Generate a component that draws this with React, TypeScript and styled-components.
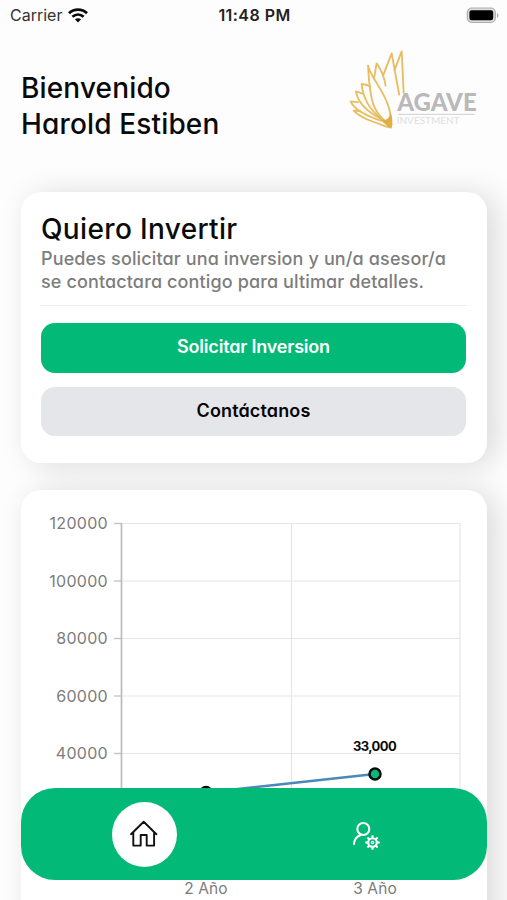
import React from "react";
import styled, { createGlobalStyle } from "styled-components";

const GREEN = "#02b978";

const Global = createGlobalStyle`
  * { box-sizing: border-box; }
  body { margin: 0; background: #fdfdfd; overflow: hidden; }
`;

const Screen = styled.main`
  width: 507px;
  height: 900px;
  overflow: hidden;
  position: relative;
  display: flex;
  flex-direction: column;
  font-family: Inter, "Liberation Sans", sans-serif;
  font-feature-settings: "cv11", "ss03";
  color: #0a0a0a;
`;

const StatusBar = styled.header`
  height: 30px;
  flex: none;
  padding: 0 8px 0 10px;
  display: grid;
  grid-template-columns: 1fr auto 1fr;
  align-items: center;
  font-size: 16px;
  font-feature-settings: normal;
`;

const Carrier = styled.div`
  display: flex;
  align-items: center;
  gap: 6px;
  color: #333;
  letter-spacing: 0;
`;

const Clock = styled.div`
  font-weight: 600;
  color: #222;
  letter-spacing: 0.45px;
`;

const Battery = styled.div`
  display: flex;
  justify-content: flex-end;
`;

const Hero = styled.section`
  height: 162px;
  flex: none;
  padding: 10px 17px 0 21px;
  display: flex;
  justify-content: space-between;
  align-items: flex-start;
`;

const Greeting = styled.h1`
  margin: 30px 0 0;
  font-size: 28px;
  line-height: 36px;
  font-weight: 500;
  letter-spacing: 0.15px;
`;

const Cards = styled.div`
  display: flex;
  flex-direction: column;
  gap: 27px;
  padding: 0 20px 0 21px;
`;

const Card = styled.section<{ $h: number }>`
  height: ${(p) => p.$h}px;
  flex: none;
  border-radius: 20px;
  background: #fff;
  box-shadow: 9px 2px 30px rgba(0, 0, 0, 0.14);
`;

const InvestCard = styled(Card)`
  padding: 19px 20px;
  display: flex;
  flex-direction: column;
`;

const CardTitle = styled.h2`
  margin: 0;
  font-size: 28px;
  line-height: 36px;
  font-weight: 500;
  letter-spacing: 0.35px;
`;

const CardText = styled.p`
  margin: 0;
  font-size: 18px;
  line-height: 23px;
  font-weight: 500;
  letter-spacing: 0.13px;
  color: #7d7d7d;
  white-space: nowrap;
`;

const Divider = styled.hr`
  width: 426px;
  height: 1px;
  flex: none;
  margin: 12px 0 17px;
  border: 0;
  background: #ededed;
`;

const Button = styled.button<{ $primary?: boolean }>`
  height: ${(p) => (p.$primary ? 50 : 49)}px;
  width: 425px;
  flex: none;
  margin: 0 0 14px;
  padding: 0 0 3px;
  border: 0;
  border-radius: 14px;
  background: ${(p) => (p.$primary ? GREEN : "#e5e6ea")};
  color: ${(p) => (p.$primary ? "#fff" : "#050505")};
  font: 600 18px Inter, sans-serif;
  font-feature-settings: inherit;
  letter-spacing: ${(p) => (p.$primary ? "-0.2px" : "0.15px")};
`;

const TabBar = styled.nav`
  position: absolute;
  left: 21px;
  right: 20px;
  top: 788px;
  height: 92px;
  border-radius: 34px;
  background: ${GREEN};
  display: flex;
  align-items: center;
  padding: 0 9px 0 12px;
`;

const Tab = styled.a`
  flex: 1;
  display: flex;
  justify-content: center;
`;

const ActiveDisc = styled.span`
  width: 65px;
  height: 65px;
  border-radius: 50%;
  background: #fff;
  display: flex;
  align-items: center;
  justify-content: center;
`;

const ChartSvg = styled.svg`
  display: block;
  font-family: Inter, sans-serif;
  font-feature-settings: normal;
`;

const Logo = () => (
  <svg width="150" height="100" viewBox="0 0 450 300" fill="none">
    <g stroke="#e8bd5f" strokeWidth="5.5" strokeLinejoin="round">
      <path d="M150 262 C132 236 104 222 95 176 C89 145 86 115 84 77 C96 125 152 165 155 256" />
      <path d="M93 142 C88 137 76 133 65 132 C68 165 84 205 122 234" />
      <path d="M71 162 L48 154 C53 188 82 215 122 236" />
      <path d="M56 187 L32 184 C43 211 80 228 126 243" />
      <path d="M62 213 L41 212 C64 236 106 248 149 263" />
      <path d="M102 116 L110 70 C125 92 134 112 137 139" />
      <path d="M128 110 L155 40 L178 166" />
      <path d="M163 92 L185 34 L191 160" />
    </g>
    <path d="M116 230 C132 246 147 240 151 218 C157 228 158 246 155 266 C142 258 127 248 116 230Z" fill="#e0ae49" />
    <text x="172" y="214" textLength="238" lengthAdjust="spacingAndGlyphs" fontSize="75" fontWeight="900" fill="#b9b9b9" fontFamily="Lato, sans-serif">AGAVE</text>
    <path d="M174 223H404" stroke="#cfcfcf" strokeWidth="3" />
    <text x="170" y="252" textLength="189" lengthAdjust="spacingAndGlyphs" fontSize="27" fill="#dedede" fontFamily="Lato, sans-serif">INVESTMENT</text>
  </svg>
);

const TICKS = [
  { label: "120000", y: 33.5 },
  { label: "100000", y: 91 },
  { label: "80000", y: 148.5 },
  { label: "60000", y: 206 },
  { label: "40000", y: 263.5 },
];

const Chart = () => (
  <ChartSvg width="466" height="410" viewBox="0 0 466 410">
    {TICKS.map((t) => (
      <g key={t.label}>
        <path d={`M101 ${t.y}H439`} stroke="#e6e6e6" strokeWidth="1.2" />
        <path d={`M93 ${t.y}H101`} stroke="#c4c4c4" strokeWidth="1.4" />
        <text x="87" y={t.y + 5.5} textAnchor="end" fontSize="16" letterSpacing="0.3" fill="#7c7c7c">{t.label}</text>
      </g>
    ))}
    <path d="M270.5 33V380M439 33V380" stroke="#e6e6e6" strokeWidth="1.2" />
    <path d="M100.5 33V380" stroke="#bcbcbc" strokeWidth="1.7" />
    <path d="M185 302.5L354 284" stroke="#4a87ba" strokeWidth="2.4" />
    <circle cx="185" cy="302.5" r="5.5" fill={GREEN} stroke="#0a0a0a" strokeWidth="2.5" />
    <circle cx="354" cy="284" r="5.5" fill={GREEN} stroke="#0a0a0a" strokeWidth="2.5" />
    <text x="353.5" y="261" textAnchor="middle" fontSize="13" fontWeight="700" letterSpacing="-0.6" fill="#0a0a0a">33,000</text>
    <text x="185" y="404" textAnchor="middle" fontSize="15.5" letterSpacing="0.1" fill="#7c7c7c">2 Año</text>
    <text x="354" y="404" textAnchor="middle" fontSize="15.5" letterSpacing="0.1" fill="#7c7c7c">3 Año</text>
  </ChartSvg>
);

const TOOTH_ANGLES = [0, 45, 90, 135, 180, 225, 270, 315];

export default function App() {
  return (
    <>
      <Global />
      <Screen>
        <StatusBar>
          <Carrier>
            Carrier
            <svg width="20" height="15" viewBox="0 0 20 15" fill="none" stroke="#0a0a0a" strokeWidth="2.8">
              <path d="M1 5.2C6 .3 14 .3 19 5.2" />
              <path d="M4.4 8.8C7.8 5.8 12.2 5.8 15.6 8.8" />
              <path d="M10 14.5L6.9 11.3C8.7 9.8 11.3 9.8 13.1 11.3Z" fill="#0a0a0a" stroke="none" />
            </svg>
          </Carrier>
          <Clock>11:48 PM</Clock>
          <Battery>
            <svg width="33" height="17" viewBox="0 0 33 17">
              <rect x="1.3" y="1" width="28" height="14.5" rx="4.5" fill="#ddd" stroke="#adadad" strokeWidth="1.2" />
              <rect x="3.4" y="3.2" width="23.8" height="10" rx="2.2" fill="#000" />
              <path d="M31 6C33 7 33 10 31 11Z" fill="#aaa" />
            </svg>
          </Battery>
        </StatusBar>
        <Hero>
          <Greeting>
            Bienvenido
            <br />
            Harold Estiben
          </Greeting>
          <Logo />
        </Hero>
        <Cards>
          <InvestCard $h={271}>
            <CardTitle>Quiero Invertir</CardTitle>
            <CardText>
              Puedes solicitar una inversion y un/a asesor/a
              <br />
              se contactara contigo para ultimar detalles.
            </CardText>
            <Divider />
            <Button $primary>Solicitar Inversion</Button>
            <Button>Contáctanos</Button>
          </InvestCard>
          <Card $h={500}>
            <Chart />
          </Card>
        </Cards>
        <TabBar>
          <Tab>
            <ActiveDisc>
              <svg width="28" height="28" viewBox="0 0 28 28" fill="none" stroke="#111" strokeWidth="1.9" strokeLinejoin="round" strokeLinecap="round">
                <path d="M1 14.2L13.7 1.8L26.4 14.2M3.3 12.5V25.6H10.7V15H16.7V25.6H24.1V12.5" />
              </svg>
            </ActiveDisc>
          </Tab>
          <Tab>
            <svg width="42" height="42" viewBox="0 0 42 42" fill="none" stroke="#fff" strokeWidth="2.1">
              <circle cx="17.3" cy="16" r="6" />
              <path d="M8 31.8C8 26.8 11 23.3 15 22" />
              <circle cx="26.5" cy="29.5" r="4.3" />
              <circle cx="26.5" cy="29.5" r="1.2" strokeWidth="1.2" />
              {TOOTH_ANGLES.map((a) => (
                <path key={a} d="M26.5 25.2V22.3" transform={`rotate(${a} 26.5 29.5)`} />
              ))}
            </svg>
          </Tab>
        </TabBar>
      </Screen>
    </>
  );
}
